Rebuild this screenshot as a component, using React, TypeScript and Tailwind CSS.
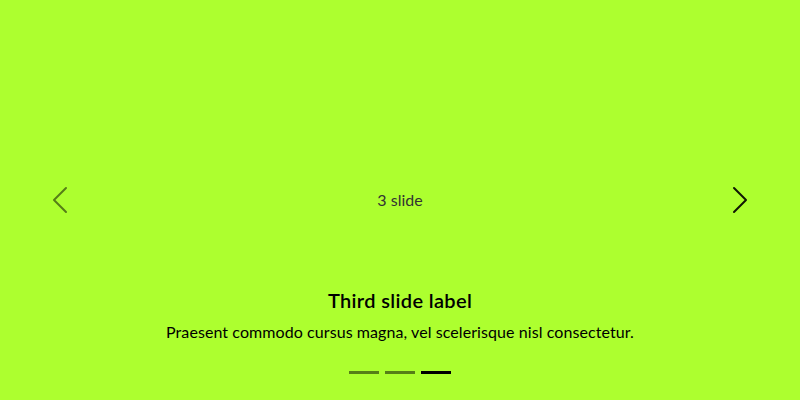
export default function App() {
  return (
    <div
      className="relative h-[400px] w-[800px] overflow-hidden bg-[#adff2f] text-[#212529]"
      style={{ fontFamily: 'Lato, "Liberation Sans", sans-serif' }}
    >
      <div className="flex h-full items-center justify-center">
        <span className="text-base leading-6 text-[#333]">3 slide</span>
      </div>

      <div className="absolute inset-x-[15%] bottom-5 flex flex-col items-center py-5 text-center text-black">
        <h5 className="mb-2 text-xl font-semibold leading-[1.2] tracking-[0.35px]">Third slide label</h5>
        <p className="mb-4 text-base leading-6 tracking-[0.08px]">Praesent commodo cursus magna, vel scelerisque nisl consectetur.</p>
      </div>

      <div className="absolute inset-x-0 bottom-4 flex justify-center gap-1.5">
        <button className="h-[23px] w-[30px] py-2.5">
          <span className="block h-[3px] w-full bg-black opacity-50" />
        </button>
        <button className="h-[23px] w-[30px] py-2.5">
          <span className="block h-[3px] w-full bg-black opacity-50" />
        </button>
        <button className="h-[23px] w-[30px] py-2.5">
          <span className="block h-[3px] w-full bg-black" />
        </button>
      </div>

      <button className="absolute inset-y-0 left-0 flex w-[15%] items-center justify-center opacity-50">
        <svg viewBox="0 0 16 16" className="h-8 w-8" fill="#000">
          <path d="M11.354 1.646a.5.5 0 0 1 0 .708L5.707 8l5.647 5.646a.5.5 0 0 1-.708.708l-6-6a.5.5 0 0 1 0-.708l6-6a.5.5 0 0 1 .708 0z" />
        </svg>
      </button>
      <button className="absolute inset-y-0 right-0 flex w-[15%] items-center justify-center opacity-90">
        <svg viewBox="0 0 16 16" className="h-8 w-8" fill="#000">
          <path d="M4.646 1.646a.5.5 0 0 1 .708 0l6 6a.5.5 0 0 1 0 .708l-6 6a.5.5 0 0 1-.708-.708L10.293 8 4.646 2.354a.5.5 0 0 1 0-.708z" />
        </svg>
      </button>
    </div>
  );
}
